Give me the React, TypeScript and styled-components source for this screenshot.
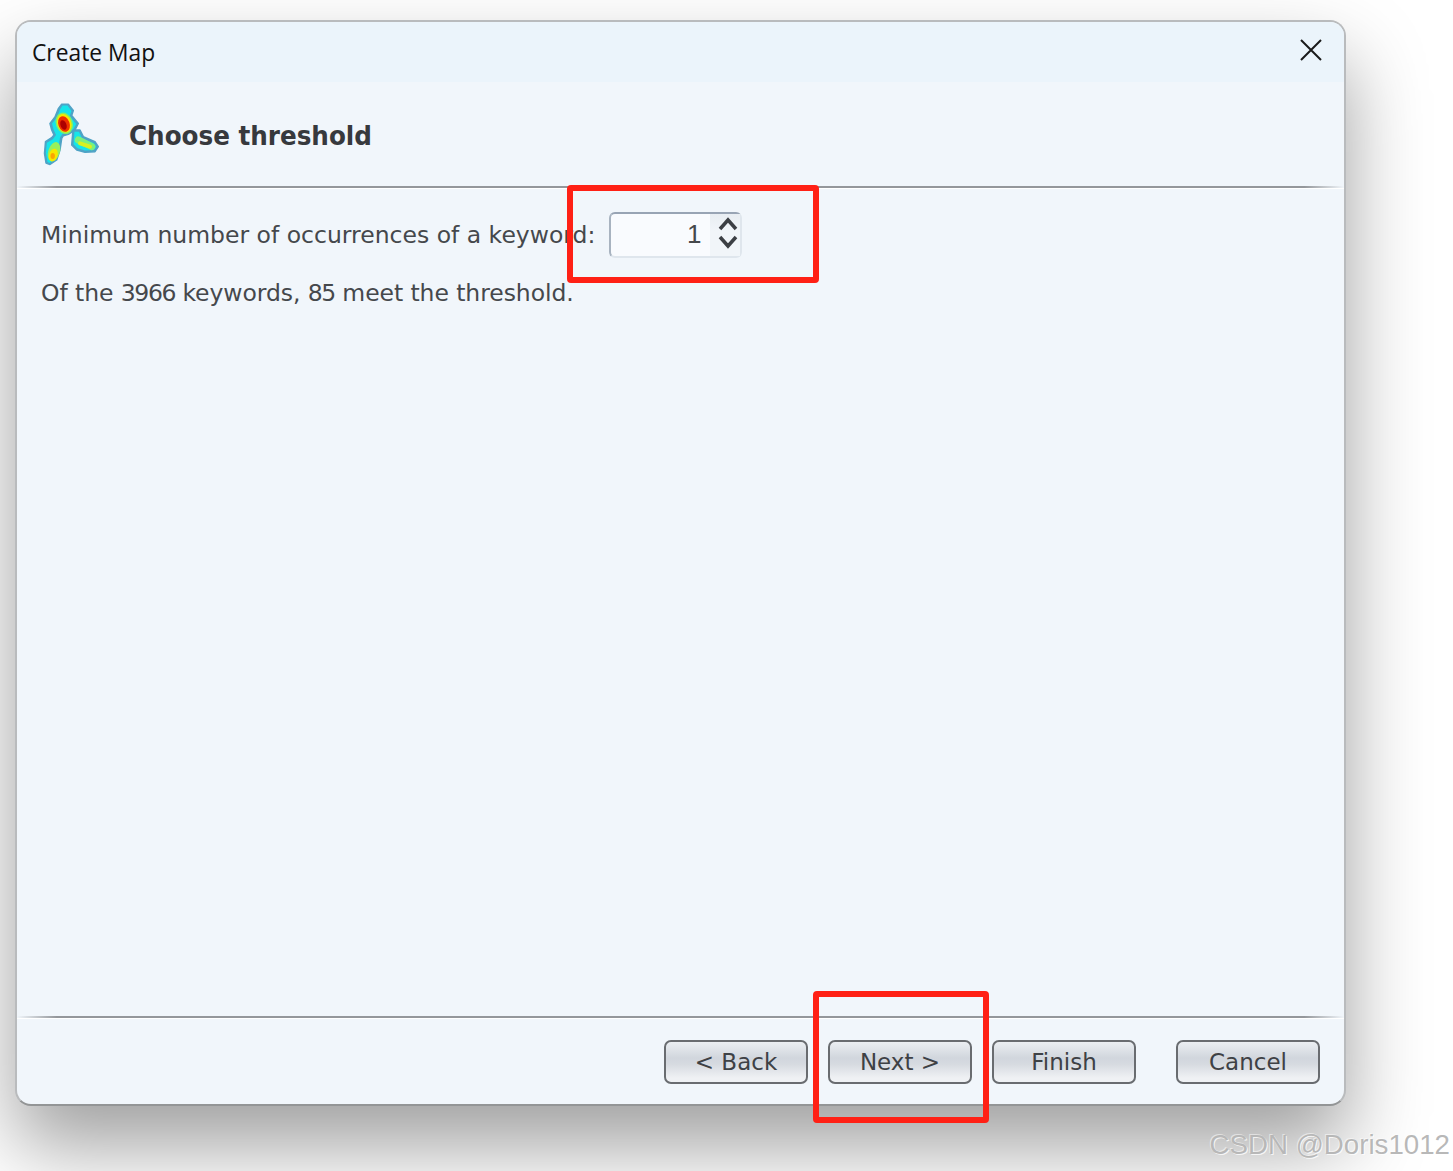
import * as React from "react";
import styled, { createGlobalStyle } from "styled-components";

const GlobalStyle = createGlobalStyle`
  html, body {
    margin: 0;
    padding: 0;
    background: #fff;
    overflow: hidden;
  }
`;

const HeatmapIcon: React.FC = () => (
  <svg width="64" height="68" viewBox="0 0 64 68" aria-hidden="true">
    <defs>
      <filter id="soft" x="-10%" y="-10%" width="120%" height="120%">
        <feGaussianBlur stdDeviation="0.5" />
      </filter>
    </defs>
    <g filter="url(#soft)">
      <g fill="#4fa3c6" stroke="#4fa3c6" strokeWidth="1.5" strokeLinejoin="round">
        <path d="M19.7 4.3 L26.3 4.3 L31.3 10.5 L29.7 15.5 L36.3 23.5 L33 30 L26.3 34.3 L21.3 35.7 L19.7 38.3 L18 50 L14.7 60 L8 64.5 L4 63 L2.5 53.3 L3.5 41.7 L9.7 37.7 L12 35 L9.7 30 L8 23.5 L13 17 L16.3 8.8 Z" />
        <path d="M31.3 30 L38 30 L41.3 36.7 L53 41.7 L56.3 46.7 L53 51.7 L43 52.3 L34.7 50 L29.7 45 L30.7 33.3 Z" />
      </g>
      <g fill="#14e4ea">
        <path d="M20.5 5.5 L25.5 5.5 L29.5 11 L27.7 16 L34.3 24 L31.5 29 L25.8 32.5 L20.5 34 L18 37.5 L16.2 49.5 L13 59 L7.5 63 L5.5 62 L3.8 53 L4.8 42.8 L10.8 39.3 L14 35 L11.5 29.5 L10 23.5 L14.8 17.5 L18 9.5 Z" />
        <path d="M32.5 31.8 L37 31.8 L40 38.3 L52 43.2 L54.3 46.8 L52 50 L43 50.5 L35.5 48.3 L31.5 44.3 L32.3 34 Z" />
      </g>
      <ellipse cx="22.3" cy="23.3" rx="8.5" ry="11" transform="rotate(-20 22.3 23.3)" fill="#7ff06a" />
      <ellipse cx="22.3" cy="23.3" rx="7" ry="9.5" transform="rotate(-20 22.3 23.3)" fill="#f6e800" />
      <ellipse cx="22" cy="24" rx="5.6" ry="8" transform="rotate(-20 22 24)" fill="#f03000" />
      <ellipse cx="21.5" cy="25" rx="3" ry="5" transform="rotate(-20 21.5 25)" fill="#ad0000" />
      <ellipse cx="12" cy="51.7" rx="5.8" ry="10" transform="rotate(18 12 51.7)" fill="#98f05c" />
      <ellipse cx="11.3" cy="55" rx="4.3" ry="6.5" transform="rotate(18 11.3 55)" fill="#f6e800" />
      <ellipse cx="10.7" cy="56" rx="2.2" ry="3" fill="#fba500" />
      <line x1="36.3" y1="40" x2="49.7" y2="46.7" stroke="#7ef07a" strokeWidth="7" strokeLinecap="round" />
      <line x1="38" y1="43.3" x2="48" y2="46.7" stroke="#d8f020" strokeWidth="4" strokeLinecap="round" />
    </g>
  </svg>
);

const App: React.FC = () => {
  return (
    <Page>
      <GlobalStyle />
      <Window>
        <TitleBar>
          <WindowTitle>Create Map</WindowTitle>
          <CloseButton aria-label="Close">
            <svg width="22" height="22" viewBox="0 0 22 22">
              <path d="M1 1 L21 21 M21 1 L1 21" stroke="#1a1a1a" strokeWidth="2" fill="none" />
            </svg>
          </CloseButton>
        </TitleBar>
        <Header>
          <HeatmapIcon />
          <Heading>Choose threshold</Heading>
        </Header>
        <Separator />
        <Content>
          <ThresholdRow>
            <Label>Minimum number of occurrences of a keyword:</Label>
            <Spinner>
              <SpinnerValue>1</SpinnerValue>
              <SpinnerArrows>
                <svg width="20" height="34" viewBox="0 0 20 34">
                  <path
                    d="M2 13 L10 4 L18 13 M2 21 L10 30 L18 21"
                    stroke="#3c3f44"
                    strokeWidth="3.5"
                    fill="none"
                  />
                </svg>
              </SpinnerArrows>
            </Spinner>
          </ThresholdRow>
          <Summary>
            Of the <Digits>3966</Digits> keywords, <Digits>85</Digits> meet the threshold.
          </Summary>
        </Content>
        <Separator />
        <Footer>
          <WizardButton>&lt; Back</WizardButton>
          <WizardButton>Next &gt;</WizardButton>
          <WizardButton>Finish</WizardButton>
          <WizardButton $spaced>Cancel</WizardButton>
        </Footer>
      </Window>
      <Highlight $left={567} $top={185} $width={252} $height={98} />
      <Highlight $left={813} $top={991} $width={176} $height={132} />
      <Watermark>CSDN @Doris1012</Watermark>
    </Page>
  );
};

const Page = styled.div`
  position: relative;
  width: 1453px;
  height: 1171px;
  padding: 20px 0 0 15px;
  box-sizing: border-box;
  overflow: hidden;
  background: #fff;
`;

const Window = styled.div`
  display: flex;
  flex-direction: column;
  width: 1331px;
  height: 1086px;
  box-sizing: border-box;
  overflow: hidden;
  background: #f1f6fb;
  border: 2px solid #b9bbbd;
  border-bottom-color: #939596;
  border-radius: 16px;
  box-shadow: 0 40px 80px rgba(0, 0, 0, 0.38);
`;

const TitleBar = styled.div`
  display: flex;
  align-items: center;
  justify-content: space-between;
  flex: none;
  height: 60px;
  padding: 0 22px 0 15px;
  background: #ebf4fb;
`;

const WindowTitle = styled.span`
  font-family: "Open Sans", "Noto Sans", sans-serif;
  font-size: 22.8px;
  color: #111;
`;

const CloseButton = styled.div`
  display: flex;
  margin-bottom: 4px;
`;

const Header = styled.div`
  display: flex;
  align-items: center;
  flex: none;
  height: 104px;
  padding-left: 25px;
  gap: 23px;
`;

const Heading = styled.h1`
  margin: 2px 0 0;
  font-family: "DejaVu Sans Condensed", "DejaVu Sans", sans-serif;
  font-size: 27.4px;
  font-weight: 700;
  color: #37393d;
`;

const Separator = styled.div`
  flex: none;
  height: 2px;
  background: linear-gradient(90deg, #f1f6fb 0, #94979b 3%, #94979b 97%, #f1f6fb 100%);
  box-shadow: 0 1px 0 #fff;
`;

const Content = styled.div`
  display: flex;
  flex-direction: column;
  flex: 1;
  padding: 24px 0 0 24px;
  gap: 15px;
`;

const ThresholdRow = styled.div`
  display: flex;
  align-items: center;
  gap: 14px;
`;

const Label = styled.span`
  font-family: "DejaVu Sans", sans-serif;
  font-size: 23.5px;
  line-height: 40px;
  color: #45484c;
`;

const Summary = styled(Label)`
  letter-spacing: -0.07px;
`;

const Digits = styled.span`
  letter-spacing: -1.4px;
`;

const Spinner = styled.div`
  display: flex;
  width: 133px;
  height: 46px;
  box-sizing: border-box;
  background: #f9fbfe;
  border: 2px solid #dfe6ed;
  border-top-color: #98a4b4;
  border-left-color: #a8b3c0;
  border-radius: 6px;
`;

const SpinnerValue = styled.div`
  flex: 1;
  padding-right: 9px;
  font-family: "Liberation Sans", sans-serif;
  font-size: 26px;
  line-height: 40px;
  text-align: right;
  color: #45484c;
`;

const SpinnerArrows = styled.div`
  display: flex;
  align-items: center;
  justify-content: flex-end;
  width: 30px;
  padding: 0 2px 4px 0;
  box-sizing: border-box;
  background: linear-gradient(#e8edf2, #f1f5f9 40%);
`;

const Footer = styled.div`
  display: flex;
  align-items: center;
  justify-content: flex-end;
  flex: none;
  height: 86px;
  box-sizing: border-box;
  padding: 2px 24px 0 0;
  gap: 20px;
`;

const WizardButton = styled.button<{ $spaced?: boolean }>`
  width: 144px;
  height: 44px;
  margin-left: ${(p) => (p.$spaced ? "20px" : "0")};
  padding: 0;
  box-sizing: border-box;
  font-family: "DejaVu Sans", sans-serif;
  font-size: 23px;
  color: #3e4145;
  background: linear-gradient(#ebeef2 0, #d1d6dd 40%, #d6dae0 55%, #eff1f4 90%);
  border: 2px solid #696c70;
  border-radius: 7px;
`;

const Highlight = styled.div<{ $left: number; $top: number; $width: number; $height: number }>`
  position: absolute;
  left: ${(p) => p.$left}px;
  top: ${(p) => p.$top}px;
  width: ${(p) => p.$width}px;
  height: ${(p) => p.$height}px;
  box-sizing: border-box;
  border: 6px solid #ff2015;
  border-radius: 4px;
`;

const Watermark = styled.span`
  position: absolute;
  right: 3px;
  top: 1129px;
  font-family: "Liberation Sans", Arial, sans-serif;
  font-size: 27.7px;
  color: rgba(180, 180, 180, 0.95);
  text-shadow: 1px 1px 0 rgba(255, 255, 255, 0.8), -1px -1px 0 rgba(255, 255, 255, 0.5);
  white-space: nowrap;
`;

export default App;
